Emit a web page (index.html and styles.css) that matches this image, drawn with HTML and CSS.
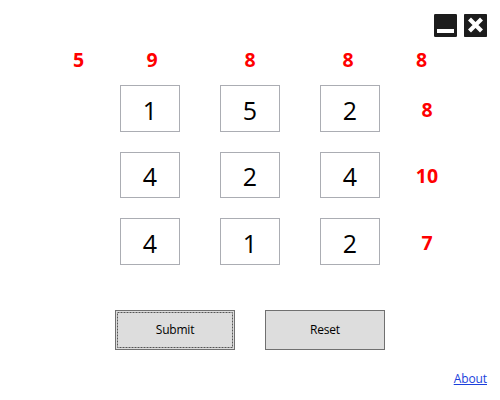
FILE: index.html
```html
<!DOCTYPE html>
<html lang="en">
<head>
<meta charset="utf-8">
<title>Number Puzzle</title>
<link rel="stylesheet" href="styles.css">
</head>
<body>
<main class="window">
  <header class="titlebar">
    <svg class="control" viewBox="0 0 23 23"><rect width="23" height="23" rx="1.3" fill="#1c1c1c"/><rect x="3" y="15" width="17" height="4" fill="#fff"/></svg>
    <svg class="control" viewBox="0 0 23 23"><rect width="23" height="23" rx="0.8" fill="#1c1c1c"/><path d="M5.5 5L17.5 17M17.5 5L5.5 17" stroke="#fff" stroke-width="4.2"/></svg>
  </header>
  <section class="totals">
    <span>5</span><span>9</span><span>8</span><span>8</span><span>8</span>
  </section>
  <section class="board">
    <div class="cell">1</div><div class="cell">5</div><div class="cell">2</div><div class="sum">8</div>
    <div class="cell middle">4</div><div class="cell middle">2</div><div class="cell middle">4</div><div class="sum">10</div>
    <div class="cell">4</div><div class="cell">1</div><div class="cell">2</div><div class="sum">7</div>
  </section>
  <section class="actions">
    <button class="button focused"><svg class="focus-ring" viewBox="0 0 116 36"><rect x="0.5" y="0.5" width="115" height="35"/></svg><span>Submit</span></button>
    <button class="button"><span>Reset</span></button>
  </section>
  <footer class="footer"><a class="about" href="#">About</a></footer>
</main>
</body>
</html>
```
FILE: styles.css
```css
* { box-sizing: border-box; }
body {
  margin: 0;
  background: #fff;
  color: #000;
  font-family: "Open Sans", "Noto Sans", sans-serif;
}
.window {
  width: 500px;
  height: 400px;
  padding-top: 14px;
  overflow: hidden;
}
.titlebar {
  display: flex;
  justify-content: flex-end;
  gap: 7px;
  height: 23px;
  padding-right: 13px;
}
.control { width: 23px; height: 23px; }
.totals {
  display: grid;
  grid-template-columns: 49px 98px 98px 98px 49px;
  height: 28px;
  margin: 9px 54px 11px;
  line-height: 28px;
  text-align: center;
}
.totals, .sum {
  color: #f00;
  font-family: "Noto Sans", "Open Sans", sans-serif;
  font-size: 19.5px;
  font-weight: 700;
}
.board {
  display: grid;
  grid-template-columns: 60px 60px 60px 14px;
  grid-template-rows: 47px 46px 47px;
  gap: 20px 40px;
  margin-left: 120px;
}
.cell, .sum {
  display: flex;
  align-items: center;
  justify-content: center;
  white-space: nowrap;
}
.cell {
  padding-top: 3px;
  border: 1px solid #abadb3;
  font-size: 25px;
  line-height: 34px;
}
.cell.middle { padding-top: 1px; }
.sum { padding-top: 2px; line-height: 26px; }
.actions {
  display: flex;
  justify-content: center;
  gap: 30px;
  margin-top: 45px;
}
.button {
  position: relative;
  width: 120px;
  height: 40px;
  padding: 0;
  border: 1px solid #707070;
  background: #ddd;
  color: #000;
  font: 12px/16px "Open Sans", "Noto Sans", sans-serif;
  letter-spacing: -0.2px;
}
.focus-ring {
  position: absolute;
  top: 1px;
  left: 1px;
  width: 116px;
  height: 36px;
  fill: none;
  stroke: #555;
  stroke-dasharray: 2 1;
}
.footer {
  display: flex;
  justify-content: flex-end;
  padding: 20px 13px 0 0;
}
.about {
  color: #1a3fdc;
  font-size: 12px;
  letter-spacing: -0.1px;
  line-height: 18px;
  text-decoration: underline;
}
```
